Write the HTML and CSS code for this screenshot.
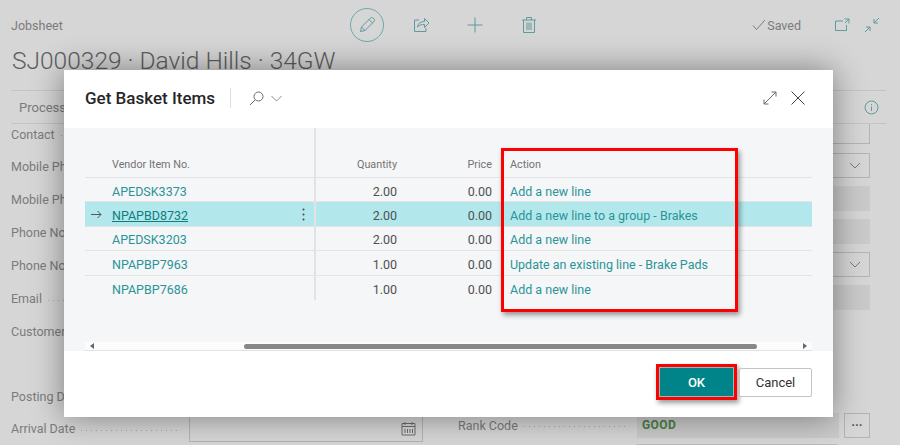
FILE: index.html
```html
<!DOCTYPE html>
<html>
<head>
  <title>Get Basket Items</title>
  <link rel="stylesheet" href="styles.css">
</head>
<body>

  <div class="page">
    <div class="top-bar">
      <span class="caption">Jobsheet</span>
      <div class="actions">
        <span class="edit-circle">
          <svg width="18" height="18" viewBox="0 0 18 18"><path d="M2.500 15.500l1-4.500L12.500 2c.8-.7 1.800-.7 2.500 0l1 1c.7.7.7 1.700 0 2.500L7 14.500zM3.500 11l3.500 3.500M11 3.500l3.500 3.500"/></svg>
        </span>
        <svg class="action-icon" width="18" height="18" viewBox="0 0 18 18"><path d="M7 4H2.500v11.500h11.500V12M5.500 11c.5-3.500 3-5.500 7-5.500V2.500l4.500 4.500-4.500 4.500V8.500c-3 0-5.500.5-7 2.500z"/></svg>
        <svg class="action-icon" width="18" height="18" viewBox="0 0 18 18"><path d="M9 1.500v15M1.500 9h15"/></svg>
        <svg class="action-icon" width="18" height="18" viewBox="0 0 18 18"><path d="M3.500 4v12.500h11V4M2 4h14M6.500 4V1.500h5V4M7 6.500v7.500M9 6.500v7.500M11 6.500v7.500"/></svg>
      </div>
      <div class="status">
        <svg class="saved-check" width="14" height="12" viewBox="0 0 14 12"><path d="M1 6.500l3.500 4L13 1"/></svg>
        <span>Saved</span>
        <svg class="window-icon" width="16" height="14" viewBox="0 0 16 14"><path d="M9 3H1.500v9.500h11V7M10.500 1H15v4.500M15 1l-4 4"/></svg>
        <svg class="window-icon" width="16" height="16" viewBox="0 0 16 16"><path d="M15 1l-5 5M10 2v4h4M1 15l5-5M6 14v-4H2"/></svg>
      </div>
    </div>

    <h1 class="title">SJ000329 · David Hills · 34GW</h1>

    <div class="tabs">
      <span>Process</span>
      <svg class="info-icon" width="15" height="15" viewBox="0 0 15 15"><circle cx="7.500" cy="7.500" r="6.500"/><path d="M7.500 6.500v4.500M7.500 4v1.200"/></svg>
    </div>

    <div class="form">
      <div class="form-col">
        <div class="row row-first"><span class="label">Contact</span><span class="dots"></span><span class="field"></span></div>
        <div class="row"><span class="label">Mobile Phone</span><span class="dots"></span><span class="field"></span></div>
        <div class="row"><span class="label">Mobile Phone</span><span class="dots"></span><span class="field"></span></div>
        <div class="row"><span class="label">Phone No.</span><span class="dots"></span><span class="field"></span></div>
        <div class="row"><span class="label">Phone No.</span><span class="dots"></span><span class="field"></span></div>
        <div class="row"><span class="label">Email</span><span class="dots"></span><span class="field"></span></div>
        <div class="row row-tall"><span class="label">Customer</span><span class="dots"></span><span class="field"></span></div>
        <div class="row row-short"><span class="label">Posting Date</span><span class="dots"></span><span class="field"></span></div>
        <div class="row">
          <span class="label">Arrival Date</span><span class="dots"></span>
          <span class="field field-box field-date">
            <svg class="cal-icon" width="15" height="15" viewBox="0 0 15 15"><path d="M1 2.500h13v11.500H1zM1 5.500h13M4 1v3M11 1v3M4 8v4M6.500 8v4M9 8v4M11.500 8v4"/></svg>
          </span>
        </div>
      </div>

      <div class="form-col form-col-right">
        <div class="row row-first"><span class="field field-box field-cut"></span></div>
        <div class="row"><span class="field field-box"><svg class="chev" width="12" height="7" viewBox="0 0 12 7"><path d="M1 1l5 5 5-5"/></svg></span></div>
        <div class="row"><span class="field field-grey"></span></div>
        <div class="row"><span class="field field-grey"></span></div>
        <div class="row"><span class="field field-box"><svg class="chev" width="12" height="7" viewBox="0 0 12 7"><path d="M1 1l5 5 5-5"/></svg></span></div>
        <div class="row"><span class="field field-grey"></span></div>
        <div class="row row-rank">
          <span class="label">Rank Code</span><span class="dots"></span>
          <span class="field field-grey rank-value">GOOD</span>
          <span class="more-btn">···</span>
        </div>
        <div class="next-line"></div>
      </div>
    </div>
  </div>

  <div class="dialog">
    <div class="dialog-head">
      <span class="dialog-title">Get Basket Items</span>
      <span class="head-divider"></span>
      <svg class="head-icon" width="15" height="15" viewBox="0 0 15 15"><circle cx="9.500" cy="5.500" r="4.500"/><path d="M6.200 8.800L1 14"/></svg>
      <svg class="head-icon head-chev" width="11" height="7" viewBox="0 0 11 7"><path d="M.5 1l5 5 5-5"/></svg>
      <span class="head-space"></span>
      <svg class="head-icon" width="14" height="14" viewBox="0 0 14 14"><path d="M1 13L13 1M8.500 1H13v4.500M1 8.500V13h4.500"/></svg>
      <svg class="head-icon head-close" width="14" height="14" viewBox="0 0 14 14"><path d="M.5.500l13 13M13.500.500l-13 13"/></svg>
    </div>

    <div class="dialog-body">
      <div class="grid-row grid-head">
        <div class="cell-first"><span>Vendor Item No.</span></div>
        <div class="cell-num">Quantity</div>
        <div class="cell-num">Price</div>
        <div class="cell-action">Action</div>
      </div>
      <div class="grid-row">
        <div class="cell-first"><a href="#">APEDSK3373</a></div>
        <div class="cell-num">2.00</div>
        <div class="cell-num">0.00</div>
        <div class="cell-action"><a href="#">Add a new line</a></div>
      </div>
      <div class="grid-row grid-selected">
        <div class="cell-first">
          <svg class="row-arrow" width="11" height="9" viewBox="0 0 11 9"><path d="M0 4.500h10M6.500 1L10 4.500 6.500 8"/></svg>
          <a href="#" class="current">NPAPBD8732</a>
          <svg class="row-menu" width="3" height="13" viewBox="0 0 3 13"><circle cx="1.500" cy="1.500" r="1"/><circle cx="1.500" cy="6.500" r="1"/><circle cx="1.500" cy="11.500" r="1"/></svg>
        </div>
        <div class="cell-num">2.00</div>
        <div class="cell-num">0.00</div>
        <div class="cell-action"><a href="#">Add a new line to a group - Brakes</a></div>
      </div>
      <div class="grid-row">
        <div class="cell-first"><a href="#">APEDSK3203</a></div>
        <div class="cell-num">2.00</div>
        <div class="cell-num">0.00</div>
        <div class="cell-action"><a href="#">Add a new line</a></div>
      </div>
      <div class="grid-row">
        <div class="cell-first"><a href="#">NPAPBP7963</a></div>
        <div class="cell-num">1.00</div>
        <div class="cell-num">0.00</div>
        <div class="cell-action"><a href="#">Update an existing line - Brake Pads</a></div>
      </div>
      <div class="grid-row grid-last">
        <div class="cell-first"><a href="#">NPAPBP7686</a></div>
        <div class="cell-num">1.00</div>
        <div class="cell-num">0.00</div>
        <div class="cell-action"><a href="#">Add a new line</a></div>
      </div>

      <div class="scrollbar">
        <span class="arrow-left"></span>
        <span class="thumb"></span>
        <span class="arrow-right"></span>
      </div>
    </div>

    <div class="dialog-foot">
      <span class="ok-frame"><button class="btn btn-ok">OK</button></span>
      <button class="btn btn-cancel">Cancel</button>
    </div>

    <div class="red-frame"></div>
  </div>

</body>
</html>
```

FILE: styles.css
```css
* { box-sizing: border-box; }
html, body { margin: 0; height: 445px; overflow: hidden; }
body { font-family: Roboto, "Noto Sans", Arial, sans-serif; font-size: 12.500px; background-color: #d6d6d6; color: #7b7b7b; position: relative; }
svg { fill: none; stroke-width: 1; flex: none; }

.page { height: 445px; overflow: hidden; padding: 0 14px 0 11px; }

.top-bar { display: flex; align-items: center; height: 50px; }
.caption { font-size: 12.500px; width: 339px; }
.actions { display: flex; align-items: center; gap: 36px; }
.edit-circle { width: 34px; height: 34px; border: 1px solid #70a9ab; border-radius: 50%; display: flex; align-items: center; justify-content: center; margin-right: -8px; }
.edit-circle svg { stroke: #5f9a9d; }
.action-icon { stroke: #5f9a9d; }
.status { margin-left: auto; margin-right: 6px; display: flex; align-items: center; font-size: 12.500px; }
.saved-check { stroke: #7b7b7b; margin-right: 1px; }
.window-icon { stroke: #5f9a9d; margin-left: 14px; }
.status span { margin-right: 19px; }

.title { font-size: 24.500px; font-weight: 300; color: #5e5e5e; margin: 0 0 0 1px; height: 40px; line-height: 22px; white-space: nowrap; }

.tabs { display: flex; align-items: center; justify-content: space-between; height: 34px; border-top: 1px solid #c4c4c4; border-bottom: 1px solid #c4c4c4; padding: 0 8px 0 8px; font-size: 13px; }
.info-icon { stroke: #5f9a9d; margin-right: -1px; }

.form { display: grid; grid-template-columns: 412px 412px; gap: 35px; }
.form-col { display: flex; flex-direction: column; }
.row { display: flex; align-items: center; height: 33px; flex: none; }
.row-first { height: 20px; margin-bottom: 6px; }
.row-tall { margin-bottom: 32px; }
.row-short { height: 32px; }
.form-col-right .row { align-items: flex-start; }
.form-col-right .row-first { margin-bottom: 9px; }
.form-col-right .row-rank { margin-top: 94px; height: 26px; align-items: center; }
.label { white-space: nowrap; font-size: 12.500px; }
.dots { flex: 1; height: 1px; margin: 3px 8px 0 6px; background-image: repeating-linear-gradient(90deg, #a9a9a9 0, #a9a9a9 1px, transparent 1px, transparent 5px); }
.field { flex: none; width: 234px; height: 25px; margin-left: auto; display: flex; align-items: center; justify-content: flex-end; padding-right: 8px; }
.field-box { border: 1px solid #b4b4b4; }
.field-cut { height: 20px; border-top: 0; border-left: 0; }
.field-date { height: 26px; padding-right: 6px; }
.field-grey { background-color: #cacaca; }
.chev { stroke: #7b7b7b; }
.cal-icon { stroke: #6d6d6d; }
.rank-value { width: 202px; justify-content: flex-start; padding-left: 5px; margin-left: 0; font-weight: 700; font-size: 12px; letter-spacing: .4px; color: #4c7f47; }
.more-btn { width: 26px; height: 25px; border: 1px solid #b4b4b4; margin-left: 5px; display: flex; align-items: center; justify-content: center; color: #555; font-weight: 700; flex: none; }
.next-line { margin: 6px 0 0 178px; width: 202px; border-top: 1px solid #bcbcbc; }

.dialog { position: absolute; left: 64px; top: 70px; width: 769px; height: 347px; background-color: #fff; display: flex; flex-direction: column; box-shadow: 0 0 30px rgba(0, 0, 0, .42); color: #505050; }

.dialog-head { height: 58px; flex: none; display: flex; align-items: center; padding: 0 28px 2px 21px; }
.dialog-title { font-size: 17px; font-weight: 500; color: #262626; white-space: nowrap; width: 145px; }
.head-divider { width: 1px; height: 20px; background-color: #dedede; margin-right: 18px; }
.head-icon { stroke: #6b6b6b; }
.head-chev { margin-left: 7px; stroke: #8a8a8a; }
.head-space { flex: 1; }
.head-close { margin-left: 14px; stroke: #444; }

.dialog-body { height: 223px; flex: none; background-color: #f5f6f8; padding: 0 21px; position: relative; }

.grid-row { display: grid; grid-template-columns: 231px 81px 95px 1fr; height: 24.400px; border-bottom: 1px solid #e4e4e6; align-items: stretch; }
.grid-row > div { display: flex; align-items: center; white-space: nowrap; padding-top: 3px; }
.grid-head { height: 50px; font-size: 10.800px; color: #737373; }
.grid-row.grid-head > div { padding-top: 24px; }
.grid-last { border-bottom: 0; }
.grid-selected { background-color: #b2e8ec; }
.grid-selected a { color: #0f7c80; }
.cell-first { border-right: 2px solid #e1e2e4; padding-left: 27px; position: relative; }
.cell-num { justify-content: flex-end; }
.cell-action { padding-left: 18px; }
.grid-row a { color: #2a9496; text-decoration: none; }
.grid-row a.current { text-decoration: underline; color: #0f7c80; }
.row-arrow { position: absolute; left: 6px; top: 8px; stroke: #555; }
.row-menu { position: absolute; right: 9px; top: 6px; fill: #444; }

.scrollbar { position: absolute; left: 21px; right: 21px; bottom: 0; height: 9px; background-color: #fcfcfd; border-bottom: 1px solid #e2e2e2; display: flex; align-items: center; padding: 0 5px; }
.arrow-left { width: 0; height: 0; border: 3px solid transparent; border-right: 4px solid #666; border-left: 0; }
.arrow-right { width: 0; height: 0; border: 3px solid transparent; border-left: 4px solid #666; border-right: 0; margin-left: auto; }
.thumb { position: absolute; left: 159px; width: 513px; height: 5px; background-color: #888; border-radius: 3px; top: 1.500px; }

.dialog-foot { flex: 1; display: flex; justify-content: flex-end; align-items: flex-start; padding: 13px 21px 0 0; gap: 2px; }
.ok-frame { display: block; width: 81px; height: 36px; border: 3px solid #f00; box-shadow: 2px 3px 5px rgba(0, 0, 0, .4); }
.btn { font-family: inherit; font-size: 13px; display: block; cursor: pointer; }
.btn-ok { width: 100%; height: 100%; background-color: #008489; color: #fff; font-weight: 500; border: 1px solid #8cbcbc; }
.btn-cancel { width: 73px; height: 29px; margin-top: 4px; background-color: #fff; color: #333; border: 1px solid #c4c4c4; border-radius: 2px; }

.red-frame { position: absolute; left: 437px; top: 78px; width: 237px; height: 164px; border: 3px solid #f00; box-shadow: 2px 3px 5px rgba(0, 0, 0, .4); }
```
